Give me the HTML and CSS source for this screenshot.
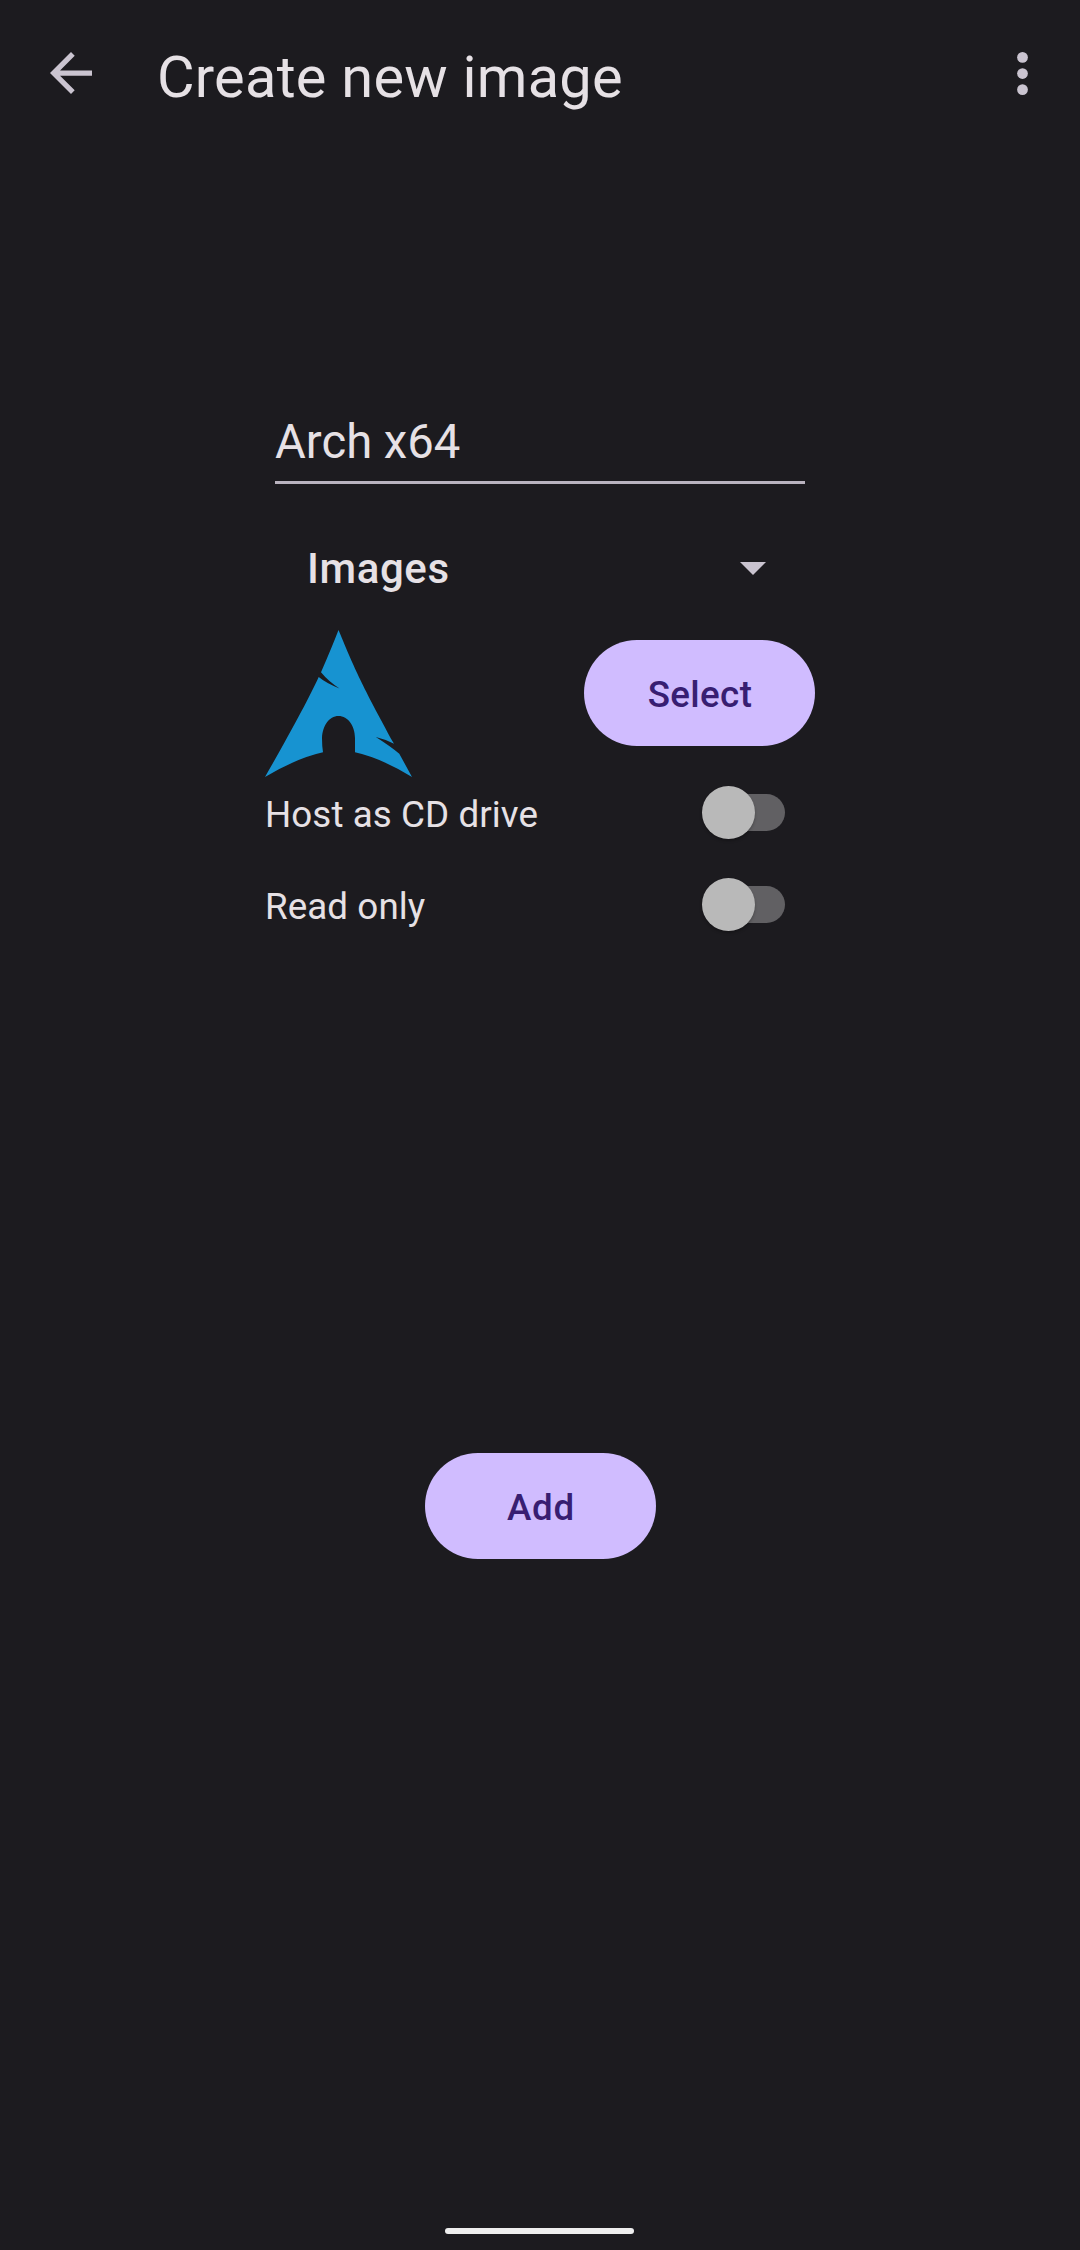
FILE: index.html
```html
<!DOCTYPE html>
<html lang="en">
<head>
<meta charset="utf-8">
<title>Create new image</title>
<link rel="stylesheet" href="styles.css">
</head>
<body>
<div class="screen">
  <header class="toolbar">
    <svg class="back" viewBox="0 0 16 16" role="img" aria-label="Back"><path d="M16 7H3.83l5.59-5.59L8 0 0 8l8 8 1.41-1.41L3.83 9H16z"/></svg>
    <h1 class="title">Create new image</h1>
    <svg class="more" viewBox="0 0 4 16" role="img" aria-label="More options"><circle cx="2" cy="2" r="2"/><circle cx="2" cy="8" r="2"/><circle cx="2" cy="14" r="2"/></svg>
  </header>
  <main class="form">
    <div class="name-field">Arch x64</div>
    <div class="spinner">
      <span>Images</span>
      <svg class="caret" viewBox="0 0 10 5"><path d="M0 0l5 5 5-5z"/></svg>
    </div>
    <div class="icon-row">
      <svg class="logo" viewBox="0 0 147 147"><path d="M73.500 0Q67 17 56 42.300Q63 51 74.500 58.500Q61 53 53.700 47C44 68 28 98 0 147Q32 128 58 122.300Q57 116 57 108C57.500 96 64 86 73.500 86S90 96 90 108V122.300Q116 128 147 147L134.300 123.700Q125 116 110.800 107Q121 109.500 129 113.700C96 53 91 42 73.500 0Z"/></svg>
      <button class="button">Select</button>
    </div>
    <div class="switch-row"><span>Host as CD drive</span><span class="switch"><span class="thumb"></span></span></div>
    <div class="switch-row"><span>Read only</span><span class="switch"><span class="thumb"></span></span></div>
  </main>
  <button class="button add">Add</button>
  <div class="home-bar"></div>
</div>
</body>
</html>
```
FILE: styles.css
```css
body {
  margin: 0;
  background: #1c1b1f;
  color: #e6e1e5;
  font-family: Roboto, sans-serif;
}
.screen {
  box-sizing: border-box;
  width: 1080px;
  height: 2250px;
  display: flex;
  flex-direction: column;
  padding-bottom: 16px;
}
.toolbar {
  display: flex;
  align-items: center;
  height: 147px;
  padding: 0 52px 0 50px;
}
.toolbar svg { fill: #cac4d0; }
.back { width: 42px; height: 42px; margin-bottom: 1px; }
.title {
  flex: 1;
  margin: 7px 0 0 65px;
  font-size: 57.75px;
  font-weight: 400;
  letter-spacing: .25px;
  line-height: 70px;
}
.more { width: 11px; height: 43px; }
.form {
  width: 550px;
  margin: 255px auto 0;
}
.name-field {
  height: 79px;
  margin: 0 10px;
  border-bottom: 3px solid #b9b3bf;
  font-size: 47.25px;
  line-height: 80px;
}
.spinner {
  display: flex;
  align-items: center;
  justify-content: space-between;
  height: 84px;
  margin: 42px 49.5px 0 42px;
  font-size: 42px;
  font-weight: 500;
  letter-spacing: .6px;
}
.caret { width: 26px; height: 13px; fill: #cac4d0; }
.icon-row {
  display: flex;
  justify-content: space-between;
  margin-top: 20px;
}
.logo { width: 147px; height: 147px; fill: #1793d1; }
.button {
  width: 231px;
  height: 106px;
  margin: 10px 0 0;
  padding: 4px 0 0 1px;
  border: 0;
  border-radius: 53px;
  background: #d0bcff;
  color: #381e72;
  font: 500 36.75px/42px Roboto, sans-serif;
  letter-spacing: .35px;
}
.switch-row {
  display: flex;
  align-items: center;
  justify-content: space-between;
  height: 72px;
  padding-right: 30px;
  font-size: 36.75px;
  letter-spacing: .08px;
}
.switch-row > span:first-child { padding-top: 2px; }
.switch-row + .switch-row { margin-top: 20px; }
.switch {
  display: flex;
  align-items: center;
  width: 80px;
  height: 37px;
  margin-bottom: 2px;
  border-radius: 19px;
  background: #616063;
}
.thumb {
  flex: none;
  width: 53px;
  height: 53px;
  margin-left: -3px;
  border-radius: 50%;
  background: #b9b9b9;
  box-shadow: 0 2px 3px rgba(0, 0, 0, .25);
}
.add {
  align-self: center;
  margin-top: 512px;
  padding-left: 2px;
  letter-spacing: .8px;
}
.home-bar {
  width: 189px;
  height: 6px;
  margin: auto 0 0 445px;
  border-radius: 3px;
  background: #eeeeee;
}
```
